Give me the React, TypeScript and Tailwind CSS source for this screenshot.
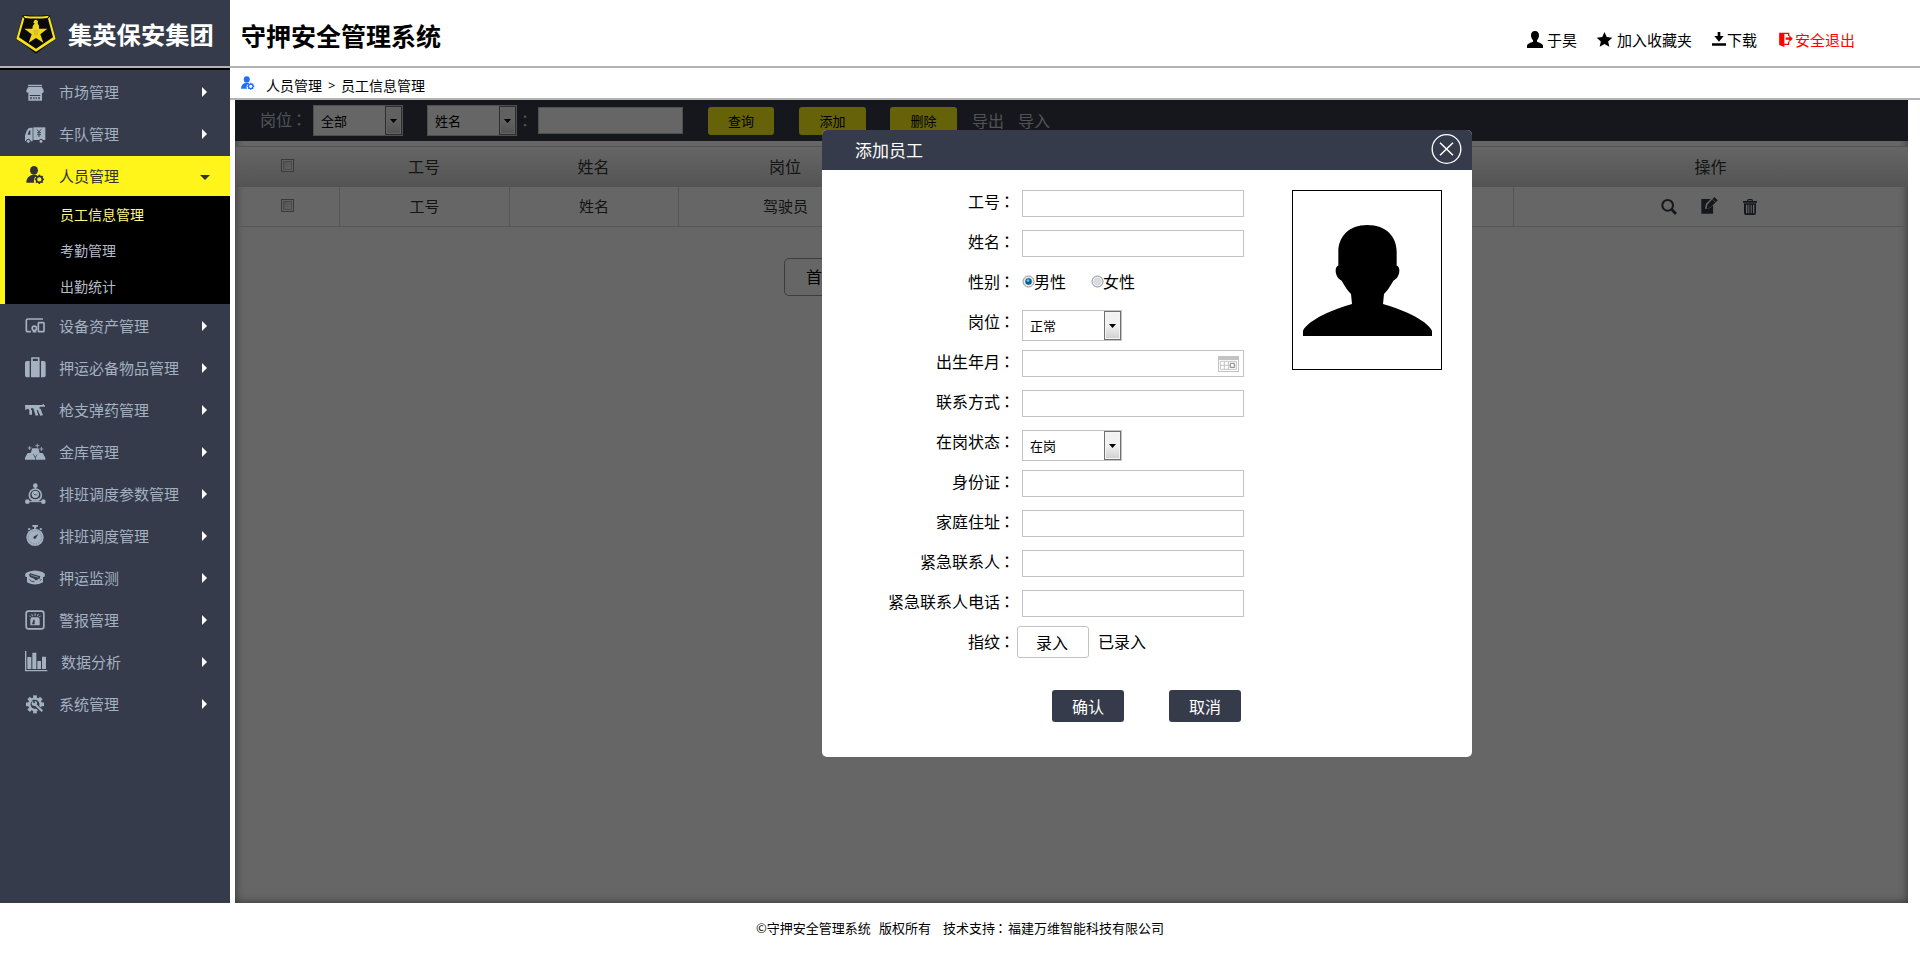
import type { ReactNode } from "react";

const Colon = () => <span className="relative right-px font-['Noto_Sans_CJK_TC',sans-serif]">：</span>;

const star = (cx: number, cy: number, r: number, k = 0.4) =>
  Array.from({ length: 10 }, (_, i) => {
    const a = -Math.PI / 2 + (i * Math.PI) / 5;
    const q = i % 2 ? r * k : r;
    return `${(cx + q * Math.cos(a)).toFixed(2)},${(cy + q * Math.sin(a)).toFixed(2)}`;
  }).join(" ");

const teeth = (cx: number, cy: number, r: number, w: number, h: number) =>
  Array.from({ length: 8 }, (_, i) => (
    <rect key={i} x={cx - w / 2} y={cy - r} width={w} height={h} transform={`rotate(${i * 45} ${cx} ${cy})`} />
  ));

const userGear = (
  <>
    <ellipse cx="33" cy="19" rx="12" ry="13" />
    <path d="M10 56C10 42 18 36 26 33h14l2 2a16 16 0 0 0-8 21z" />
    <circle cx="49" cy="46" r="9" fill="none" stroke="currentColor" strokeWidth="5" />
    {teeth(49, 46, 14, 5, 5)}
  </>
);

const icons: Record<string, ReactNode> = {
  shop: (
    <>
      <path d="M15 14h42v4H15zM16 20h40l6 11v4a5 5 0 0 1-9 2 5 5 0 0 1-9 0 5 5 0 0 1-9 0 5 5 0 0 1-9 0 5 5 0 0 1-9 0 5 5 0 0 1-7-2v-4z" />
      <path fillRule="evenodd" d="M16 36h41v26H16zM20 45v3h32v-3zM22 51v7h4v-7zM31 51v7h3v-7zM38 51v7h3v-7zM46 51v7h4v-7z" />
    </>
  ),
  truck: (
    <>
      <path fillRule="evenodd" d="M29 17v41H6V40l6-15q3-8 9-8zM22 25q-4 0-5 4l-3 9h8z" />
      <path d="M31 16h36v38H31z" />
      <path d="M42 22l6 8 6-8M48 30v15M42 32h12M42 38h12" stroke="#353b4a" strokeWidth="2.6" fill="none" />
      <circle cx="16" cy="58" r="6" stroke="#353b4a" strokeWidth="3" />
      <circle cx="54" cy="58" r="6" stroke="#353b4a" strokeWidth="3" />
    </>
  ),
  user: userGear,
  devices: (
    <g fill="none" stroke="currentColor" strokeWidth="5">
      <path d="M60 15H14q-4 0-4 4v31q0 3 4 3h10" />
      <circle cx="34" cy="43" r="6.500" />
      <path d="M29 53h11" />
      <rect x="46" y="26" width="17" height="27" rx="2" />
    </g>
  ),
  suitcase: (
    <>
      <path d="M12 15h8v49h-8q-6 0-6-6V21q0-6 6-6zM54 15h8q6 0 6 6v37q0 6-6 6h-8zM24 15h26v49H24z" />
      <path d="M27 17V6h20v11" fill="none" stroke="currentColor" strokeWidth="5" />
    </>
  ),
  gun: <path d="M6 21h52l1-3h3l1 4h3v4H52l-4 4 5 3 7 19-8 1-8-17-3 1 5 15-8 1-7-22H24v4l3 2v13h-8V36l-4-4-8 4z" />,
  gold: (
    <>
      <path d="M6 59v-6l8-14h14l8 14v6zM38 59v-6l7-14h14l8 14v6zM22 42l6-17h18l5 17h-8l-6 8-6-8z" />
      <path d="M20 18v12M14 24h12M43 11v12M37 17h12M55 21v12M49 27h12" stroke="currentColor" strokeWidth="2.5" />
    </>
  ),
  nodes: (
    <>
      <circle cx="37" cy="11" r="7" />
      <circle cx="13" cy="59" r="7" />
      <circle cx="61" cy="59" r="7" />
      <circle cx="37" cy="39" r="18" fill="none" stroke="currentColor" strokeWidth="5" />
      <circle cx="37" cy="37" r="11" />
      <path d="M12 59h50M37 11v12" fill="none" stroke="currentColor" strokeWidth="3" />
      <path d="M25 47q12 9 24 0v8H25z" />
      <path d="M31 34q4 8 12 4" fill="none" stroke="#353b4a" strokeWidth="2" />
    </>
  ),
  watch: (
    <>
      <path d="M28 3h17v5h-5v6h-7V8h-5zM14 15l5-4 4 4-5 4zM58 15l-5-4-4 4 5 4z" />
      <circle cx="36" cy="40" r="26" />
      <circle cx="36" cy="40" r="20" fill="none" stroke="#353b4a" strokeWidth="1.500" strokeDasharray="2 3" />
      <path d="M46 30L34 37a4 4 0 1 0 5 5z" fill="#353b4a" />
    </>
  ),
  camera: (
    <>
      <path d="M6 27q0-6 8-9 22-9 44 0 8 3 8 9l-2 6h-4v16q-24 13-48 0V33H8z" />
      <path d="M18 26l4-4 30 9-2 7-5 1-2 4-6-1-6-5-10-4z" fill="#353b4a" />
      <path d="M23 27l23 7" stroke="#a4b1c1" strokeWidth="2" />
      <path d="M50 44l6-4M20 40l5 6 10 1" stroke="#353b4a" strokeWidth="2.500" fill="none" />
    </>
  ),
  alarm: (
    <>
      <rect x="9.500" y="9.500" width="53" height="53" rx="7" fill="none" stroke="currentColor" strokeWidth="5" />
      <path d="M22 52V35q0-7 7-7h14q7 0 7 7v17z" />
      <path d="M27 49l4-14h4v14z" fill="#353b4a" />
      <path d="M36 16v8M26 18l3 7M46 18l-3 7M19 23l5 5M53 23l-5 5" stroke="currentColor" strokeWidth="3" />
    </>
  ),
  chart: <path d="M6 3h4v57h63v4H6zM13 21h12v36H13zM28 8h12v49H28zM43 33h11v24H43zM57 20h12v37H57z" />,
  gear: (
    <>
      <circle cx="36" cy="37" r="17" fill="none" stroke="currentColor" strokeWidth="7" />
      {teeth(36, 37, 27, 11, 9)}
      <path d="M40 42l18 17" stroke="#353b4a" strokeWidth="12" />
      <path d="M34 35l24 23" stroke="currentColor" strokeWidth="6" />
      <circle cx="34" cy="34" r="8" />
      <path d="M31 23l3 10" stroke="#353b4a" strokeWidth="5" />
    </>
  ),
};

const Icon = ({ name }: { name: string }) => (
  <svg viewBox="0 0 72 72" fill="currentColor" className="size-6 shrink-0 overflow-visible">
    {icons[name]}
  </svg>
);

const Item = ({ icon, label, pad }: { icon: string; label: string; pad?: boolean }) => (
  <li className="flex h-10 items-center pr-[23px] pl-[23px] text-[15px] text-[#a4b1c1]">
    <Icon name={icon} />
    <span className={pad ? "ml-3.5" : "ml-3"}>{label}</span>
    <svg viewBox="0 0 5 10" className="mb-px ml-auto h-2.5 w-[5px] fill-white">
      <path d="M0 0l5 5-5 5z" />
    </svg>
  </li>
);

const Select = ({ value, className }: { value: string; className: string }) => (
  <div className={`flex h-[31px] items-stretch border border-[#c3c3c3] bg-white pl-[7px] text-[13px] text-black ${className}`}>
    <span className="flex flex-1 items-center">{value}</span>
    <span className="flex w-[17px] items-center justify-center border border-[#707070] bg-linear-to-b from-[#f2f2f2] from-50% to-[#cfcfcf] to-100% shadow-[inset_0_0_0_1px_#f4f4f4]">
      <svg viewBox="0 0 7 4" className="h-1 w-[7px]">
        <path d="M0 0h7L3.500 4z" />
      </svg>
    </span>
  </div>
);

const Check = () => (
  <span className="flex size-[13px] border border-[#8e8f8f] bg-[#f4f4f4] p-px">
    <span className="flex-1 border border-[#b5b9c0] bg-linear-to-br from-[#cbcfd5] to-[#f6f6f6]" />
  </span>
);

const Radio = ({ on }: { on?: boolean }) => (
  <svg viewBox="0 0 13 13" className="size-[13px]">
    <circle cx="6.500" cy="6.500" r="5.500" fill="#f2f2f2" stroke="#8b8f94" />
    <circle cx="6.500" cy="6.500" r="4" fill={on ? "#c9dbe8" : "#d9dcdf"} />
    {on && <circle cx="6.500" cy="6.500" r="3.200" fill="#125a86" />}
    {on && <circle cx="6" cy="5.600" r="1.400" fill="#57c4ef" />}
  </svg>
);

const Row = ({ label, children }: { label: string; children?: ReactNode }) => (
  <div className="flex h-10 items-start">
    <div className="w-[194px] shrink-0 text-right leading-[22px] whitespace-nowrap">
      {label}
      <Colon />
    </div>
    <div className="ml-1.5 flex">{children ?? <div className="h-[27px] w-[222px] border border-[#c3c3c3]" />}</div>
  </div>
);

const Sidebar = () => (
  <nav className="flex w-[230px] shrink-0 flex-col border-t-2 border-black bg-[#353b4a] pt-0.5">
    <ul className="flex flex-col gap-0.5">
      <Item icon="shop" label="市场管理" />
      <Item icon="truck" label="车队管理" />
      <li className="text-[#333]">
        <div className="flex h-10 items-center bg-[#fff51a] pr-5 pl-[23px] text-[15px]">
          <Icon name="user" />
          <span className="ml-3">人员管理</span>
          <svg viewBox="0 0 10 5" className="mt-0.5 ml-auto h-[5px] w-2.5 fill-[#333]">
            <path d="M0 0h10L5 5z" />
          </svg>
        </div>
        <ul className="border-l-[5px] border-[#fff51a] bg-black pl-[55px] text-sm leading-9 text-[#b4bcc6]">
          <li className="h-9 text-[#fffa80]">员工信息管理</li>
          <li className="h-9">考勤管理</li>
          <li className="h-9">出勤统计</li>
        </ul>
      </li>
      <Item icon="devices" label="设备资产管理" />
      <Item icon="suitcase" label="押运必备物品管理" />
      <Item icon="gun" label="枪支弹药管理" />
      <Item icon="gold" label="金库管理" />
      <Item icon="nodes" label="排班调度参数管理" />
      <Item icon="watch" label="排班调度管理" />
      <Item icon="camera" label="押运监测" />
      <Item icon="alarm" label="警报管理" />
      <Item icon="chart" label="数据分析" pad />
      <Item icon="gear" label="系统管理" />
    </ul>
  </nav>
);

const Header = () => (
  <header className="flex h-[68px] border-b-2 border-[#b3b3b3]">
    <div className="flex w-[230px] items-center bg-[#353b4a] pl-4">
      <svg viewBox="0 0 120 120" className="mt-0.5 size-10">
        <path d="M20 3Q60 8 101 3L120 76Q92 94 60 119 28 94 0 76z" fill="#0a0a0a" />
        <path d="M22 5Q60 10 99 5l-5 7Q60 15 27 12z" fill="#f5e31c" />
        <path d="M20 8l5 6L9 70l51 34 51-34L96 14l5-6 18 67L60 113 1 75z" fill="#f5e31c" />
        <path
          d="M54 20q8-6 12 2l-1 6q5 6 4 16h25L73 61l9 25-22-14-22 14 9-25-22-17h24q1-10 7-16l-4-2z"
          fill="#eed51c"
        />
        <path d="M60 46v20M54 48l2 14M66 48l-2 14" stroke="#c4a51a" strokeWidth="2" />
      </svg>
      <span className="mt-[3px] ml-3 text-[24.300px] leading-none font-bold whitespace-nowrap text-white">集英保安集团</span>
    </div>
    <h1 className="ml-[11px] flex items-center pt-[5px] pb-px text-[25px] leading-none font-bold">守押安全管理系统</h1>
    <div className="mr-[65px] ml-auto flex items-center pt-3 text-[15px] leading-none">
      <span className="mr-5 flex items-center gap-1">
        <svg viewBox="0 0 48 51" className="h-[17px] w-4">
          <path d="M24 0c8 0 12 5 12 13 0 7-3 11-6 15v4c8 3 18 6 18 13v6H0v-6c0-7 10-10 18-13v-4c-3-4-6-8-6-15C12 5 16 0 24 0z" />
        </svg>
        于昊
      </span>
      <span className="mr-5 flex items-center gap-[5px]">
        <svg viewBox="0 0 42 40" className="h-[15px] w-[15px] overflow-visible">
          <polygon points={star(21, 22, 23, 0.47)} />
        </svg>
        加入收藏夹
      </span>
      <span className="mr-[22px] flex items-center gap-px">
        <svg viewBox="0 0 42 42" className="size-3.5">
          <path d="M17 0h8v12h10L21 29 7 12h10zM0 34h42v7H0z" />
        </svg>
        下载
      </span>
      <span className="flex items-center gap-0.5 text-[#f00]">
        <svg viewBox="0 0 42 46" className="h-[15px] w-3.5 fill-current">
          <path d="M0 3L16 6v40L0 40zM0 2h31v10h-4V6H0zM16 36h11v-7h4v11H16zM20 17h11v-7l11 10.500L31 31v-7H20z" />
        </svg>
        安全退出
      </span>
    </div>
  </header>
);

const cell = "flex items-center justify-center";
const yellowBtn = "flex h-7 items-center justify-center rounded-[3px] bg-[#fff51a] text-[13px] text-black";

const Staff = () => (
  <>
    <div className="flex h-[41px] items-start bg-[#353b4a] pl-[25px] text-white">
      <span className="mt-[5px] w-[53px] text-base leading-7 text-[#c9cdd4]">
        岗位
        <Colon />
      </span>
      <Select value="全部" className="mt-[5px] w-[90px]" />
      <Select value="姓名" className="mt-[5px] ml-6 w-[90px]" />
      <span className="mt-[5px] ml-px w-5 text-base leading-[30px] text-[#c9cdd4]">
        <Colon />
      </span>
      <div className="mt-[7px] h-[27px] w-[145px] border border-[#c3c3c3] bg-white" />
      <button className={`mt-[7px] ml-[25px] w-[66px] ${yellowBtn}`}>查询</button>
      <button className={`mt-[7px] ml-[25px] w-[67px] ${yellowBtn}`}>添加</button>
      <button className={`mt-[7px] ml-6 w-[67px] ${yellowBtn}`}>删除</button>
      <span className="mt-1.5 ml-[15px] text-base leading-7 text-[#c9cdd4]">导出</span>
      <span className="mt-1.5 ml-3.5 text-base leading-7 text-[#c9cdd4]">导入</span>
    </div>
    <div className="mt-[5px] ml-px grid h-[41px] grid-cols-[103px_170px_169px_214px_621px_1fr] border-y border-[#d0d0d0] bg-linear-to-b from-[#fdfdfd] to-[#d2d2d2] pb-0.5 text-base text-[#333]">
      <div className={cell}>
        <Check />
      </div>
      <div className={cell}>工号</div>
      <div className={cell}>姓名</div>
      <div className={cell}>岗位</div>
      <div />
      <div className={cell}>操作</div>
    </div>
    <div className="mx-px grid h-10 grid-cols-[104px_170px_169px_214px_621px_1fr] divide-x divide-[#d8d8d8] border-b border-[#d8d8d8] text-[15px] text-[#333]">
      <div className={`${cell} pb-0.5`}>
        <Check />
      </div>
      <div className={cell}>工号</div>
      <div className={cell}>姓名</div>
      <div className={cell}>驾驶员</div>
      <div />
      <div className={`${cell} gap-6 pr-[3px] text-[#353b4a]`}>
        <svg viewBox="0 0 48 48" className="size-4 fill-none stroke-current">
          <circle cx="20" cy="19" r="16" strokeWidth="6" />
          <path d="M31 30l14 15" strokeWidth="8" />
        </svg>
        <svg viewBox="0 0 50 52" className="mb-0.5 h-[17px] w-[17px] fill-current">
          <path d="M0 6h29L14 21l-3 16 16-3 9-9v26H0z" />
          <path d="M40 0l10 10-22 22-12 3 3-12z" />
          <path d="M34 7l9 9" stroke="#fff" strokeWidth="2" />
        </svg>
        <svg viewBox="0 0 42 48" className="ml-px h-4 w-3.5 fill-current">
          <path fillRule="evenodd" d="M0 6h12q0-6 5-6h8q5 0 5 6h12v5H0zM16 6h10V4H16zM3 13h36v29q0 6-6 6H9q-6 0-6-6zM9 17v26h4V17zM16 17v26h3V17zM23 17v26h3V17zM30 17v26h4V17z" />
        </svg>
      </div>
    </div>
    <div className="mt-[31px] ml-[549px] flex">
      <button className="h-[38px] rounded-[5px] border border-[#999] px-[21px] pb-0.5 text-base text-black">首页</button>
    </div>
  </>
);

const darkBtn = "h-8 w-[72px] rounded-[3px] bg-[#353b4a] pb-px text-base text-white";

const Dialog = () => (
  <section className="absolute top-[30px] left-[587px] flex h-[627px] w-[650px] flex-col overflow-hidden rounded-[5px] bg-white text-base text-black">
    <div className="flex h-10 items-center bg-[#353b4a] pr-2.5 pl-[33px] text-[17px] text-white">
      <span>添加员工</span>
      <svg viewBox="0 0 93 90" className="mb-0.5 ml-auto h-[30px] w-[31px] fill-none stroke-white">
        <circle cx="46.500" cy="45" r="43" strokeWidth="4" />
        <path d="M27 26l39 38M66 26L27 64" strokeWidth="4.500" />
      </svg>
    </div>
    <div className="flex pt-5">
      <div>
        <Row label="工号" />
        <Row label="姓名" />
        <Row label="性别">
          <div className="flex h-[22px] items-center leading-[22px]">
            <Radio on />
            <span className="-ml-px">男性</span>
            <span className="ml-[25px] flex items-center">
              <Radio />
              <span className="-ml-px">女性</span>
            </span>
          </div>
        </Row>
        <Row label="岗位">
          <Select value="正常" className="w-[100px]" />
        </Row>
        <Row label="出生年月">
          <div className="flex h-[27px] w-[222px] items-center justify-end border border-[#c3c3c3] pr-1">
            <svg viewBox="0 0 63 48" className="h-4 w-[21px]">
              <path d="M0 0h63v48H0z" fill="#c3c3c3" />
              <path d="M3 12h57v33H3z" fill="#fff" />
              <path d="M7 16h48v24H7zM7 28h48M19 16v24M31 16v24" fill="none" stroke="#c3c3c3" strokeWidth="3" />
              <path d="M37 22h12v12H37z" fill="#fff" stroke="#999" strokeWidth="3.500" />
            </svg>
          </div>
        </Row>
        <Row label="联系方式" />
        <Row label="在岗状态">
          <Select value="在岗" className="w-[100px]" />
        </Row>
        <Row label="身份证" />
        <Row label="家庭住址" />
        <Row label="紧急联系人" />
        <Row label="紧急联系人电话" />
        <Row label="指纹">
          <button className="-mt-1 -ml-[5px] h-8 w-[72px] rounded-[3px] border border-[#c3c3c3] pr-0.5 pb-px">录入</button>
          <span className="ml-[9px] leading-[22px]">已录入</span>
        </Row>
      </div>
      <div className="ml-12 flex h-[180px] w-[150px] justify-center border border-black">
        <svg viewBox="0 0 387 333" className="mt-[34px] h-[111px] w-[129px]">
          <path d="M193 0C250 0 281 36 281 80v42c12 0 12 36-10 45-10 18-17 29-28 40l-3 30c50 14 130 46 147 80v16H0v-16c17-34 97-66 147-80l-3-30c-11-11-18-22-28-40-22-9-22-45-10-45V80C106 36 137 0 193 0z" />
        </svg>
      </div>
    </div>
    <div className="mt-5 ml-[230px] flex gap-[45px]">
      <button className={darkBtn}>确认</button>
      <button className={darkBtn}>取消</button>
    </div>
  </section>
);

export default function App() {
  return (
    <div className="flex h-[953px] w-[1920px] flex-col overflow-hidden bg-white font-['Noto_Sans_CJK_SC',sans-serif] text-black">
      <Header />
      <div className="flex h-[835px]">
        <Sidebar />
        <div className="flex flex-1 flex-col">
          <div className="flex h-8 items-center border-b-2 border-[#b3b3b3] pt-1 pl-[11px] text-sm">
            <svg viewBox="0 0 60 64" fill="currentColor" className="mb-0.5 h-4 w-[15px] overflow-visible text-[#1f6ff5]">
              <g transform="translate(-10 -5)">{userGear}</g>
            </svg>
            <span className="ml-2.5">人员管理</span>
            <span className="mx-1.5 w-[7px] pt-px font-['Noto_Sans'] text-[13px]">&gt;</span>
            <span>员工信息管理</span>
          </div>
          <main className="relative mr-3 ml-[5px] flex-1 bg-white shadow-[inset_0_0_10px_rgba(0,0,0,0.5)]">
            <Staff />
            <div className="absolute inset-0 bg-black/60" />
            <Dialog />
          </main>
        </div>
      </div>
      <footer className="flex h-[50px] items-center justify-center pb-px text-[13px] whitespace-pre">
        <span>©守押安全管理系统</span>
        <span className="ml-2">版权所有</span>
        <span className="ml-3">技术支持</span>
        <Colon />
        <span>福建万维智能科技有限公司</span>
      </footer>
    </div>
  );
}
